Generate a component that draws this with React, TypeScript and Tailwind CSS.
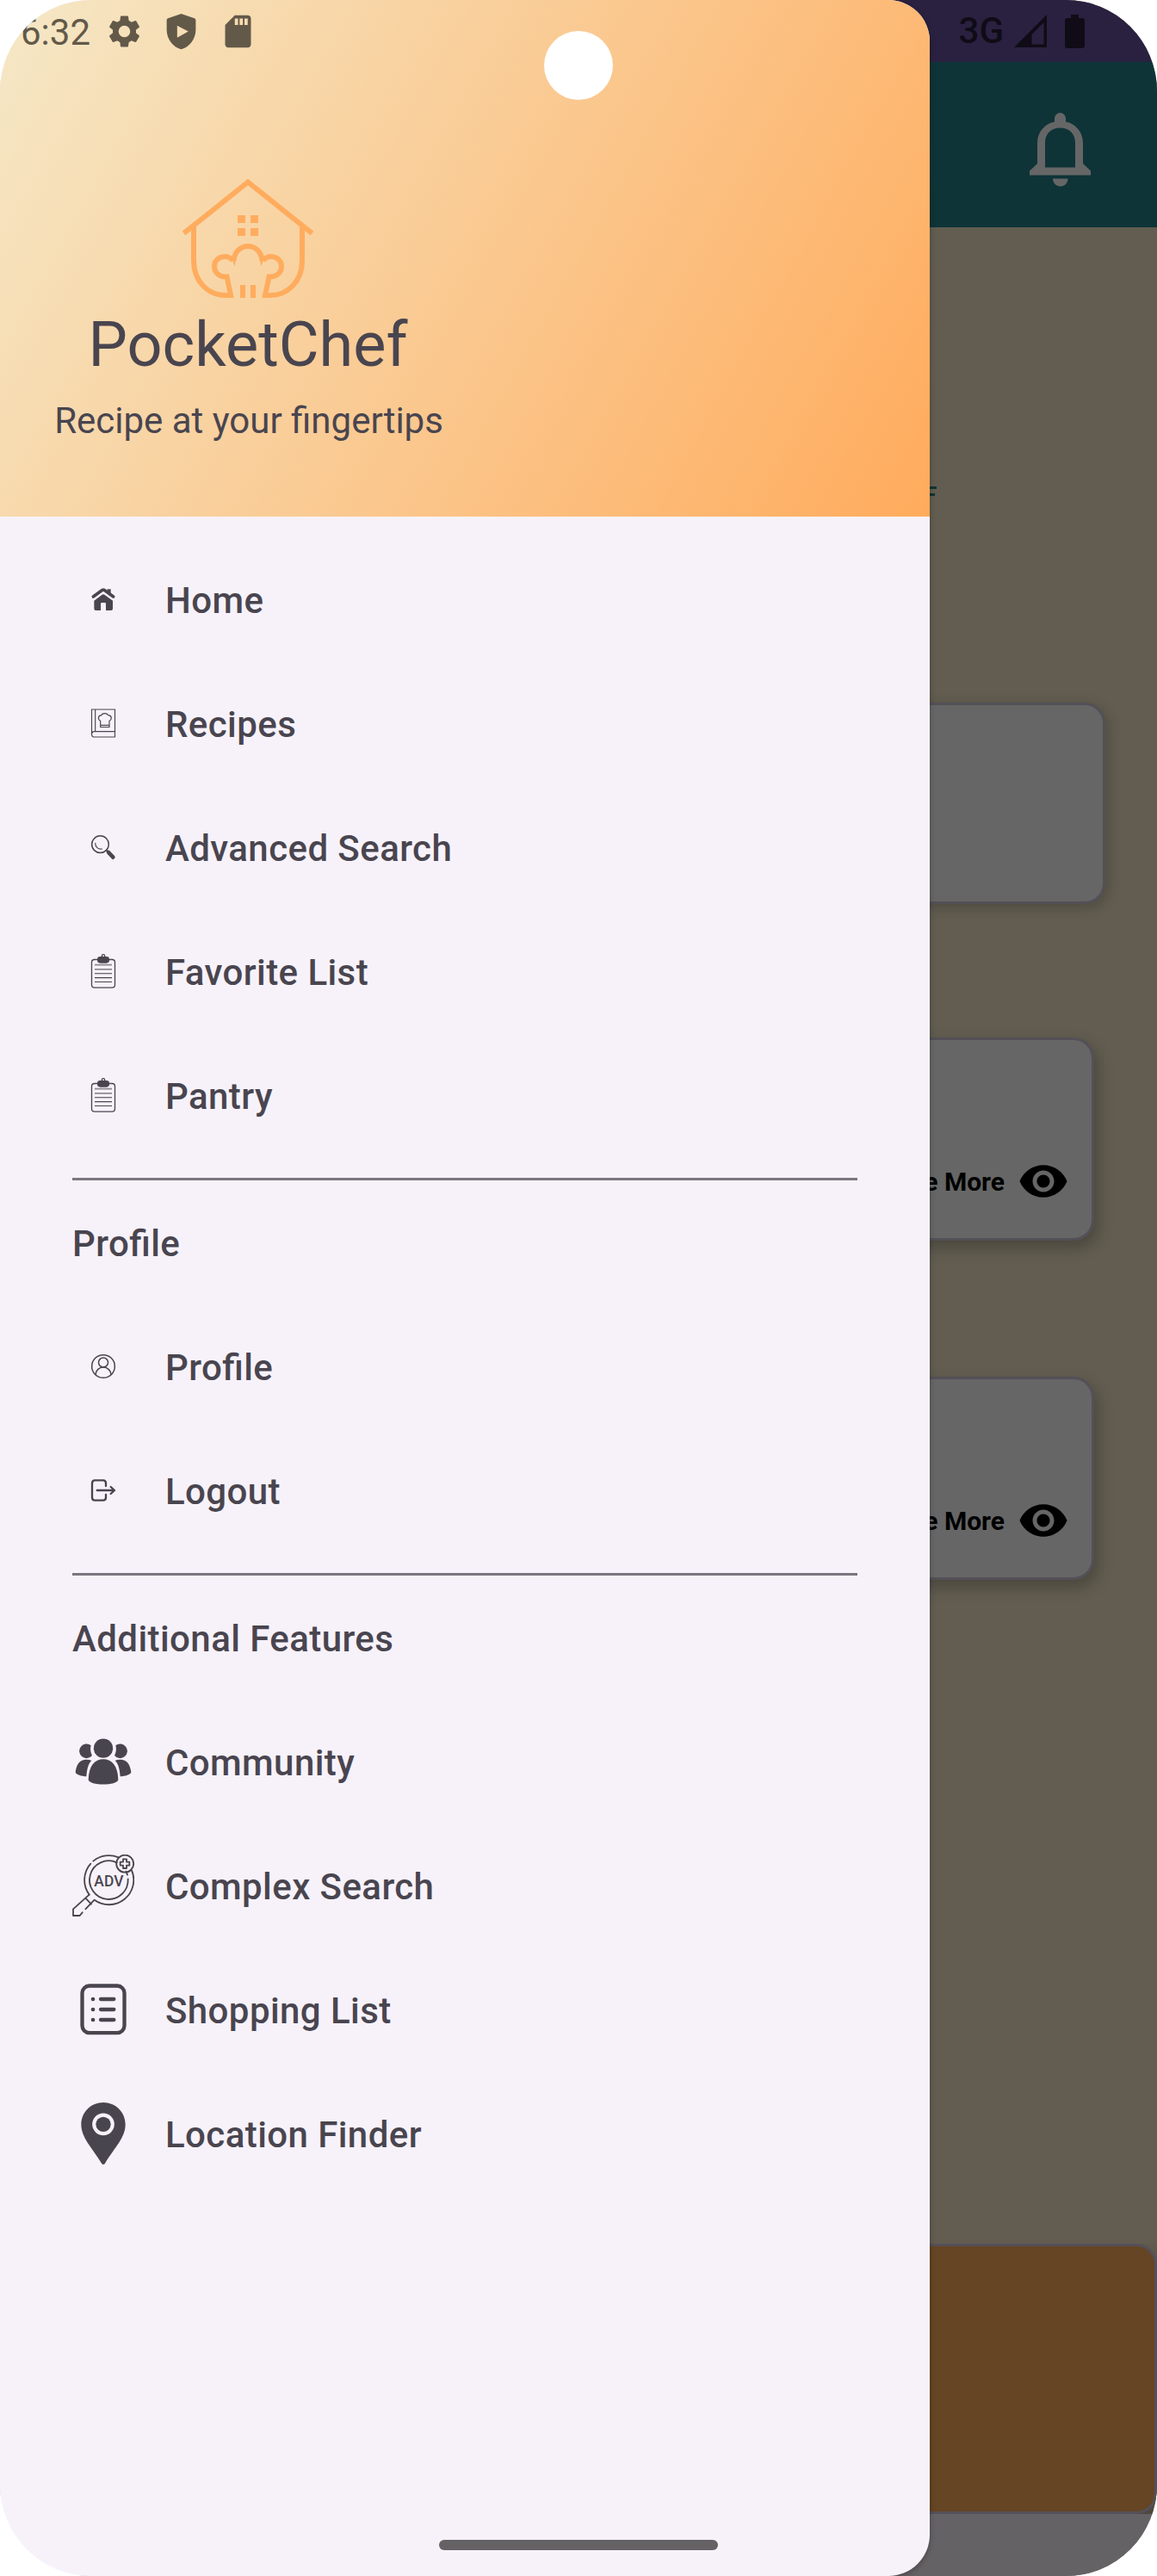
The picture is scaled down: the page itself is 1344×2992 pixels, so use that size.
import type { ReactNode } from "react";
import { MdSdCard, MdSettings, MdVisibility } from "react-icons/md";

function ShieldPlay() {
  return (
    <svg viewBox="0 0 24 24" className="size-[45px]" fill="currentColor" fillRule="evenodd">
      <path d="M12 1 3.8 3.9Q3 4.2 3 5v6c0 5.55 3.84 10.74 9 12 5.16-1.26 9-6.45 9-12V5q0-.8-.8-1.1ZM9.5 8.4v7.4L16.4 12Z" />
    </svg>
  );
}

function Signal() {
  return (
    <svg viewBox="0 0 38 38" className="h-[38px] w-[38px]" fill="currentColor" fillRule="evenodd">
      <path d="M38 0V38H0ZM34.5 9 20.5 23V34.5H34.5Z" />
    </svg>
  );
}

function Battery() {
  return (
    <svg viewBox="0 0 23 39" className="h-[39px] w-[23px]" fill="currentColor">
      <path d="M7 0h9v4h4q3 0 3 3v29q0 3-3 3H3q-3 0-3-3V7q0-3 3-3h4Z" />
    </svg>
  );
}

function Bell() {
  return (
    <svg viewBox="1196 131 71 86" className="h-[86px] w-[71px] text-[#666666]" fill="currentColor" fillRule="evenodd">
      <path d="M1225 141.5V137.500a6.500 6.500 0 0 1 13 0V141.500C1249 143.500 1258 153 1258 166V190L1267 198.500V203.500H1196V198.500L1205 190V166C1205 153 1214 143.500 1225 141.500ZM1214 194.500H1249V166C1249 155 1242 148.500 1231.500 148.500S1214 155 1214 166Z" />
      <path d="M1223 207.500h17.500c0 5-4 9-8.750 9s-8.750-4-8.750-9Z" />
    </svg>
  );
}

function Logo() {
  return (
    <svg viewBox="212 208 152 138" className="h-[138px] w-[152px]" fill="none" stroke="#ffac5e" strokeWidth="6">
      <path d="M213.500 271 288 211.500 362.500 271" />
      <path d="M225 263V303C225 327 242 343 262 343H268L263.500 321.500C254 322 249 316 249 309.500C249 302 255 298 261.500 298C265 298 268 299.500 270.500 302.500" />
      <path d="M351 263V303C351 327 334 343 314 343H308L312.500 321.500C322 322 327 316 327 309.500C327 302 321 298 314.500 298C311 298 308 299.500 305.500 302.500" />
      <path d="M271.500 303C272 293 279 286 288 286S304 293 304.500 303" />
      <path d="M268.500 299 272.700 309.500 274.500 298ZM307.500 299 303.300 309.500 301.500 298Z" fill="#ffac5e" stroke="none" />
      <path d="M282 331v15M294 331v15" />
      <path d="M276 250h9v9h-9ZM291 250h9v9h-9ZM276 265h9v9h-9ZM291 265h9v9h-9Z" fill="#ffac5e" stroke="none" />
    </svg>
  );
}

function Glyph({ viewBox, children }: { viewBox: string; children: ReactNode }) {
  return (
    <svg viewBox={viewBox} className="size-[72px] shrink-0" fill="none" stroke="currentColor" strokeLinecap="round" strokeLinejoin="round">
      {children}
    </svg>
  );
}

const HomeIcon = () => (
  <Glyph viewBox="72 60 216 216">
    <path d="M145 159 177 136Q180 134 183 136L215 159" strokeWidth="11" />
    <path d="M194 133h12v18l-12-8Z" fill="currentColor" stroke="none" />
    <path
      d="M148 173 176 152Q180 149 184 152L213 173V201Q213 207 207 207H189V184Q189 180 185 180H175Q171 180 171 184V207H154Q148 207 148 201Z"
      fill="currentColor"
      stroke="none"
    />
  </Glyph>
);

const RecipesIcon = () => (
  <Glyph viewBox="72 492 216 216">
    <g strokeWidth="3.500" strokeLinecap="butt" strokeLinejoin="miter">
      <path d="M139.500 640V552H220.500V648H147Q139.500 648 139.500 638.500T148 629H220.500M152 552V629" />
      <path d="M170 613.500V592C161 588 160 573 174 572Q176 566 185 566T197 572C211 573 210 588 201 592V613.500ZM170 607H201" />
    </g>
  </Glyph>
);

const SearchIcon = () => (
  <Glyph viewBox="72 924 216 216">
    <circle cx="169.500" cy="1022" r="29.500" strokeWidth="4.500" />
    <path d="M152 1018C152 1032 162 1040 175 1038" strokeWidth="3.500" />
    <path d="M191 1043 198 1050" strokeWidth="6" />
    <path d="M198 1050 214 1067" strokeWidth="14" />
  </Glyph>
);

const ClipboardIcon = () => (
  <Glyph viewBox="72 216 216 216">
    <rect x="139.500" y="283.500" width="81" height="98" rx="10" strokeWidth="4" />
    <rect x="159" y="273" width="42" height="23" rx="10" fill="currentColor" stroke="none" />
    <circle cx="180" cy="271" r="5" strokeWidth="4" />
    <path d="M150 302H210M150 317.500H210" strokeWidth="5" strokeOpacity="0.6" strokeLinecap="butt" />
    <path d="M150 332H210" strokeWidth="4" strokeOpacity="0.8" strokeLinecap="butt" />
    <path d="M150 347H210M150 361.500H210" strokeWidth="3.500" strokeLinecap="butt" />
  </Glyph>
);

const ProfileIcon = () => (
  <Glyph viewBox="72 453 216 216">
    <g strokeWidth="4.500" strokeLinecap="butt">
      <circle cx="180" cy="561" r="40" />
      <circle cx="180" cy="547.500" r="16.500" />
      <path d="M153 591A27 27 0 0 1 207 591" />
    </g>
  </Glyph>
);

const LogoutIcon = () => (
  <Glyph viewBox="72 885 216 216">
    <g strokeWidth="7">
      <path d="M189 978V968Q189 958 179 958H151Q141 958 141 968V1018Q141 1028 151 1028H179Q189 1028 189 1018V1008" />
      <path d="M158 993H216M206 981 219 993 206 1005" />
    </g>
  </Glyph>
);

const CommunityIcon = () => (
  <Glyph viewBox="72 630 216 216">
    <g fill="currentColor" stroke="none">
      <path d="M137 682A25 25 0 1 0 141 717C135 706 134 692 137 682Z" />
      <path d="M223 682A25 25 0 1 1 219 717C225 706 226 692 223 682Z" />
      <circle cx="180" cy="692" r="33.500" />
      <path d="M128 800C130 752 150 730 180 730S230 752 232 800C232 812 205 817.500 180 817.500S128 812 128 800Z" />
      <path d="M83 774C87 745 100 731 120 731Q133 731 139 735C127 746 123 766 121 790C105 789 83 784 83 774Z" />
      <path d="M277 774C273 745 260 731 240 731Q227 731 221 735C233 746 237 766 239 790C255 789 277 784 277 774Z" />
    </g>
  </Glyph>
);

const ComplexSearchIcon = () => (
  <Glyph viewBox="72 72 216 216">
    <g strokeWidth="5.500">
      <path d="M145 95A86 86 0 0 1 233 82M279 127A86 86 0 0 1 149 230L118 262M131 212A86 86 0 0 1 136 104" />
      <path d="M227 100A67 67 0 1 0 266 157M259 131 264 143" />
      <circle cx="255.500" cy="104" r="30" />
      <path d="M249 88H261V98H271V110H261V120H249V110H239V98H249Z" />
      <path d="M131 212 75 262V285H98L107 274M118 224 138 245" />
    </g>
    <text x="148" y="182" textLength="103" lengthAdjust="spacingAndGlyphs" fontSize="53" fontWeight="500" fontFamily="Roboto, sans-serif" fill="currentColor" stroke="none">
      ADV
    </text>
  </Glyph>
);

const ShoppingIcon = () => (
  <Glyph viewBox="72 504 216 216">
    <rect x="106.500" y="529.500" width="147" height="164" rx="25" strokeWidth="13" />
    <path d="M171 576H217M171 612H217M171 648H217" strokeWidth="13" />
    <path d="M144 576h.1M144 612h.1M144 648h.1" strokeWidth="14" />
  </Glyph>
);

const LocationIcon = () => (
  <Glyph viewBox="72 936 216 216">
    <path
      d="M180 936C137 936 103 970 103 1013C103 1058 140 1092 174 1148Q180 1156 186 1148C220 1092 257 1058 257 1013C257 970 223 936 180 936ZM180 973.500A38.500 38.500 0 1 1 180 1050.500A38.500 38.500 0 1 1 180 973.500Z"
      fill="currentColor"
      fillRule="evenodd"
      stroke="none"
    />
    <circle cx="180" cy="1012" r="26" fill="currentColor" stroke="none" />
  </Glyph>
);

function Item({ icon, label }: { icon: ReactNode; label: string }) {
  return (
    <li className="flex h-36 items-center gap-9">
      {icon}
      <span className="pt-[3px]">{label}</span>
    </li>
  );
}

function Section({ title, children }: { title: string; children: ReactNode }) {
  return (
    <section className="mt-6 border-t-[3px] border-[#7a757f]">
      <h2 className="flex h-36 items-center pt-[3px]">{title}</h2>
      <ul>{children}</ul>
    </section>
  );
}

function Drawer() {
  return (
    <aside className="absolute inset-y-0 left-0 w-[1080px] overflow-hidden rounded-r-[48px] bg-[#f7f2fa] text-[#49454f] shadow-[0_2px_6px_rgba(0,0,0,0.3)]">
      <header className="h-[600px] bg-[linear-gradient(119.05deg,#f5e8c7,#ffab5c)] pt-[208px]">
        <div className="flex w-[576px] flex-col items-center">
          <Logo />
          <h1 className="mt-[13px] text-[72px] leading-[84px]">PocketChef</h1>
          <p className="mt-[22px] ml-[2px] text-[42px] leading-[48px]">Recipe at your fingertips</p>
        </div>
      </header>
      <nav className="px-[84px] pt-6 text-[42px] leading-[48px] font-medium tracking-[0.42px] [font-feature-settings:'liga'_1]">
        <ul>
          <Item icon={<HomeIcon />} label="Home" />
          <Item icon={<RecipesIcon />} label="Recipes" />
          <Item icon={<SearchIcon />} label="Advanced Search" />
          <Item icon={<ClipboardIcon />} label="Favorite List" />
          <Item icon={<ClipboardIcon />} label="Pantry" />
        </ul>
        <Section title="Profile">
          <Item icon={<ProfileIcon />} label="Profile" />
          <Item icon={<LogoutIcon />} label="Logout" />
        </Section>
        <Section title="Additional Features">
          <Item icon={<CommunityIcon />} label="Community" />
          <Item icon={<ComplexSearchIcon />} label="Complex Search" />
          <Item icon={<ShoppingIcon />} label="Shopping List" />
          <Item icon={<LocationIcon />} label="Location Finder" />
        </Section>
      </nav>
    </aside>
  );
}

function MoreCard() {
  return (
    <div className="mr-[73px] flex h-[236px] items-end justify-end rounded-[24px] border-[3px] border-[#545058] bg-[#666666] pr-[26px] pb-[36px] text-black shadow-[4px_8px_18px_rgba(0,0,0,0.25)]">
      <div className="flex items-center gap-[15px]">
        <span className="pt-[2px] text-[30px] leading-9 font-bold">See More</span>
        <MdVisibility className="size-[60px]" />
      </div>
    </div>
  );
}

function Screen() {
  return (
    <div className="ml-auto flex h-full w-[444px] flex-col bg-[#625d50]">
      <div className="h-[72px] bg-[#2a2140]" />
      <div className="flex h-48 items-center justify-end bg-[#0e3438] pt-3 pr-[77px]">
        <Bell />
      </div>
      <main className="flex flex-1 flex-col pt-[301px]">
        <div className="mr-[256px] flex flex-col items-end gap-[5px]">
          <span className="h-[3px] w-12 bg-[#0e3438]" />
          <span className="mr-[2px] h-[3px] w-12 bg-[#0e3438]" />
        </div>
        <div className="mt-[240px] mr-[60px] h-[234px] rounded-[24px] border-[3px] border-[#545058] bg-[#666666] shadow-[3px_4px_16px_rgba(0,0,0,0.2)]" />
        <div className="mt-[155px] flex flex-col gap-[158px]">
          <MoreCard />
          <MoreCard />
        </div>
      </main>
      <div className="h-[314px] bg-linear-to-b from-[#5f5a4d] to-[#4e483c]">
        <div className="h-full rounded-[24px] border-[3px] border-[#545058] bg-[#654524]" />
      </div>
      <div className="h-[72px] bg-[#656266]" />
    </div>
  );
}

export default function App() {
  return (
    <div className="h-[2992px] w-[1344px] bg-white font-['Roboto',sans-serif]">
      <div className="relative h-full overflow-hidden rounded-[106px]">
        <Screen />
        <Drawer />
        <div className="absolute inset-x-0 top-0 flex h-[72px] items-center justify-between pr-[84px] pl-6">
          <div className="flex items-center gap-[21px] text-[#635949]">
            <span className="w-[77px] pt-[3px] text-[42px] leading-[48px]">6:32</span>
            <MdSettings className="size-[45px]" />
            <ShieldPlay />
            <MdSdCard className="size-[45px]" />
          </div>
          <div className="flex items-center text-[#0f0c17]">
            <span className="text-[42px] leading-[48px] font-medium">3G</span>
            <span className="ml-[12px]"><Signal /></span>
            <span className="ml-[21px]"><Battery /></span>
          </div>
        </div>
        <div className="absolute top-[36px] left-[632px] size-20 rounded-full bg-white" />
        <div className="absolute bottom-[30px] left-[510px] h-3 w-[324px] rounded-full bg-[#646265]" />
      </div>
    </div>
  );
}
